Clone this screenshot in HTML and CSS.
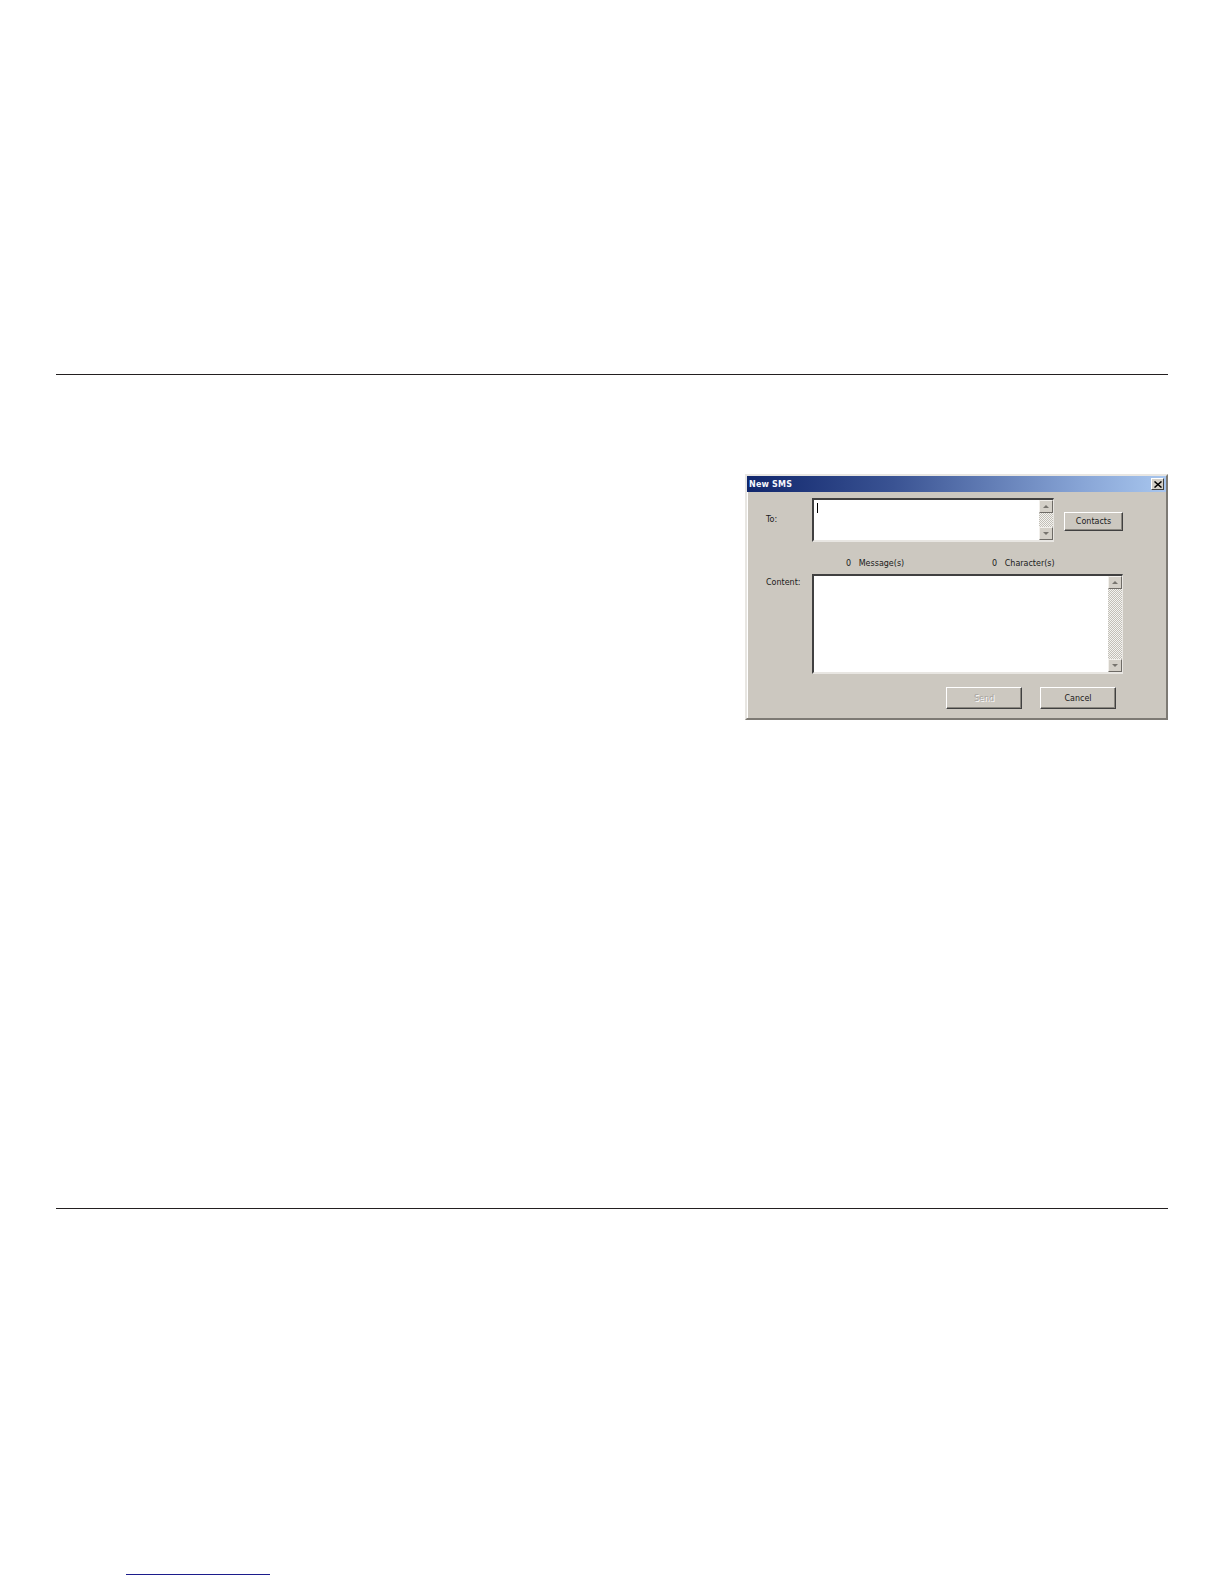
FILE: index.html
```html
<!DOCTYPE html>
<html lang="en">
<head>
    <meta charset="UTF-8">
    <title>New SMS</title>
    <link rel="stylesheet" href="styles.css">
</head>
<body>
    <div class="page">
        <div class="rule top-rule"></div>

        <div class="figure">
            <div class="dialog">
                <div class="titlebar">
                    <span class="title">New SMS</span>
                    <span class="close">
                        <svg width="8" height="7" viewBox="0 0 8 7"><path d="M0.5 0.5 L7.5 6.5 M7.5 0.5 L0.5 6.5" stroke="#000" stroke-width="1.5"/></svg>
                    </span>
                </div>

                <div class="dlg-body">
                    <div class="row">
                        <div class="label to-label">To:</div>
                        <div class="field to-field">
                            <span class="caret"></span>
                            <div class="scrollbar">
                                <span class="sb-btn up"></span>
                                <span class="sb-track"></span>
                                <span class="sb-btn down"></span>
                            </div>
                        </div>
                        <button class="btn contacts">Contacts</button>
                    </div>

                    <div class="counts">
                        <span class="count msg">0&nbsp;&nbsp; Message(s)</span>
                        <span class="count chars">0&nbsp;&nbsp; Character(s)</span>
                    </div>

                    <div class="row">
                        <div class="label content-label">Content:</div>
                        <div class="field content-field">
                            <div class="scrollbar">
                                <span class="sb-btn up"></span>
                                <span class="sb-track"></span>
                                <span class="sb-btn down"></span>
                            </div>
                        </div>
                    </div>

                    <div class="actions">
                        <button class="btn send" disabled>Send</button>
                        <button class="btn cancel">Cancel</button>
                    </div>
                </div>
            </div>
        </div>

        <div class="rule bottom-rule"></div>

        <div class="footer">
            <span class="link-line"></span>
        </div>
    </div>
</body>
</html>
```

FILE: styles.css
```css
body {
    margin: 0;
    padding: 0;
    background: #fff;
    font-family: 'DejaVu Sans', 'Liberation Sans', sans-serif;
}
.page {
    width: 1112px;
    margin-left: 56px;
    padding-top: 374px;
    height: 1210px;
    position: relative;
}
.rule {
    height: 1px;
    background-color: #231f20;
}
.figure {
    display: flex;
    justify-content: flex-end;
    margin-top: 99px;
    height: 734px;
}

/* dialog window */
.dialog {
    width: 419px;
    height: 242px;
    background-color: #ccc8c0;
    border: 2px solid;
    border-color: #e8e6e2 #7d7a74 #7d7a74 #e8e6e2;
    box-shadow: inset 1px 1px 0 #fff;
}
.titlebar {
    height: 16px;
    background: linear-gradient(90deg, #10266c 0%, #3a5393 35%, #88a5d6 80%, #a8c6ee 100%);
    display: flex;
    align-items: center;
    justify-content: space-between;
    padding: 0 2px;
}
.title {
    color: #f4f6fb;
    font-size: 8px;
    font-weight: bold;
    letter-spacing: 0.2px;
}
.close {
    width: 13px;
    height: 12px;
    background-color: #d4d0c8;
    border: 1px solid;
    border-color: #fff #404040 #404040 #fff;
    display: flex;
    align-items: center;
    justify-content: center;
    box-sizing: border-box;
}
.dlg-body {
    padding-top: 6px;
}
.row {
    display: flex;
    align-items: flex-start;
}
.label {
    width: 46px;
    padding-left: 19px;
    font-size: 8px;
    color: #1a1a1a;
}
.to-label {
    padding-top: 17px;
}
.content-label {
    padding-top: 4px;
}
.field {
    background-color: #fff;
    border-top: 2px solid #404040;
    border-left: 2px solid #404040;
    border-right: 1px solid #e8e6e2;
    border-bottom: 2px solid #e8e6e2;
    display: flex;
    justify-content: flex-end;
    position: relative;
}
.to-field {
    width: 239px;
    height: 40px;
}
.content-field {
    width: 308px;
    height: 96px;
}
.caret {
    position: absolute;
    left: 3px;
    top: 3px;
    width: 1px;
    height: 10px;
    background-color: #000;
}
.scrollbar {
    width: 14px;
    display: flex;
    flex-direction: column;
}
.sb-btn {
    height: 13px;
    background-color: #d4d0c8;
    border: 1px solid;
    border-color: #f2f0ec #6e6b66 #6e6b66 #f2f0ec;
    box-sizing: border-box;
    position: relative;
}
.sb-btn::after {
    content: '';
    position: absolute;
    left: 3px;
    border-left: 3px solid transparent;
    border-right: 3px solid transparent;
}
.sb-btn.up::after {
    top: 4px;
    border-bottom: 3px solid #77746e;
}
.sb-btn.down::after {
    top: 4px;
    border-top: 3px solid #77746e;
}
.sb-track {
    flex: 1;
    background: repeating-conic-gradient(#f4f3f0 0 25%, #c2bfb7 0 50%) 0 0 / 2px 2px;
}
.btn {
    font-family: 'DejaVu Sans', 'Liberation Sans', sans-serif;
    font-size: 8px;
    color: #1a1a1a;
    background-color: #ccc8c0;
    border: 1px solid;
    border-color: #fff #404040 #404040 #fff;
    box-shadow: inset -1px -1px 0 #8a8780;
    padding: 0;
}
.contacts {
    width: 59px;
    height: 19px;
    margin-left: 10px;
    margin-top: 14px;
}
.counts {
    position: relative;
    height: 12px;
    margin-top: 17px;
    margin-bottom: 3px;
    font-size: 8px;
    color: #1a1a1a;
}
.count {
    position: absolute;
    top: 0;
}
.count.msg { left: 99px; }
.count.chars { left: 245px; }
.actions {
    display: flex;
    margin-top: 13px;
    padding-left: 199px;
    gap: 18px;
}
.actions .btn {
    width: 76px;
    height: 22px;
}
.send {
    color: #a8a5a0;
    text-shadow: 1px 1px 0 #fff;
}

.footer {
    height: 366px;
    position: relative;
}
.link-line {
    position: absolute;
    left: 70px;
    top: 365px;
    width: 144px;
    height: 1px;
    background-color: #1c1c8c;
}
```
